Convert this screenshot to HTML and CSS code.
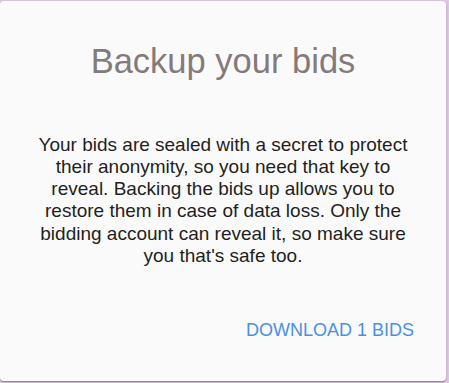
FILE: index.html
```html
<!DOCTYPE html>
<html>
<head>
<meta charset="utf-8">
<link rel="stylesheet" href="styles.css">
</head>
<body>
<div class="card">
  <h1 class="title">Backup your bids</h1>
  <p class="text">Your bids are sealed with a secret to protect their anonymity, so you need that key to reveal. Backing the bids up allows you to restore them in case of data loss. Only the bidding account can reveal it, so make sure you that's safe too.</p>
  <div class="actions">
    <button class="btn">DOWNLOAD 1 BIDS</button>
  </div>
</div>
</body>
</html>
```

FILE: styles.css
```css
html, body {
  margin: 0;
  padding: 0;
  background: #dcc8e0;
  width: 449px;
  height: 383px;
  overflow: hidden;
}
.card {
  margin-top: 1px;
  width: 446px;
  height: 380px;
  background: #fafafa;
  border-radius: 4px;
  box-shadow: 0 1px 3px rgba(0,0,0,0.2), 0 1px 1px rgba(0,0,0,0.14), 0 2px 1px -1px rgba(0,0,0,0.12);
  box-sizing: border-box;
  display: flex;
  flex-direction: column;
  align-items: center;
  font-family: "Liberation Sans", Arial, sans-serif;
}
.title {
  margin: 38.5px 0 0;
  font-size: 34.5px;
  font-weight: 400;
  color: #857a7a;
  line-height: 42px;
}
.text {
  margin: 52px 0 0;
  padding: 0 36px;
  font-size: 19px;
  line-height: 22.3px;
  color: #1f1f1f;
  text-align: center;
}
.actions {
  align-self: stretch;
  display: flex;
  justify-content: flex-end;
  margin-top: 45px;
  padding-right: 24px;
}
.btn {
  background: none;
  border: 0;
  padding: 8px 8px;
  font-family: "Liberation Sans", Arial, sans-serif;
  font-size: 18px;
  color: #4a90e2;
}
```
